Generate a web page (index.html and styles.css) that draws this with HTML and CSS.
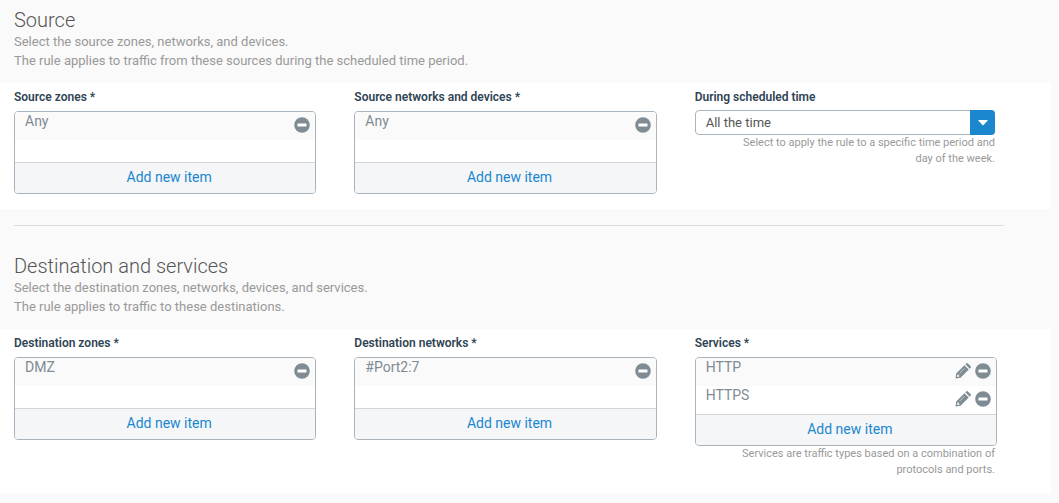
FILE: index.html
```
<!DOCTYPE html>
<html lang="en">

<head>
  <meta charset="UTF-8">
  <meta name="viewport" content="width=device-width, initial-scale=1.0">
  <title>Firewall rule</title>
  <link rel="stylesheet" href="styles.css">
</head>

<body>
  <!-- shared icons -->
  <svg class="icon-defs" aria-hidden="true">
    <symbol id="icon-remove" viewBox="0 0 16 16">
      <circle cx="8" cy="8" r="7.8" fill="currentColor" />
      <rect x="3.5" y="6.5" width="9" height="3" rx="0.5" fill="#fff" />
    </symbol>
    <symbol id="icon-edit" viewBox="0 0 16 16">
      <path fill="currentColor" fill-rule="evenodd" d="M1.2 10.4 9.4 2.2l4.4 4.4-8.2 8.2-5.1.7zM2.4 11.6l-.5 2.5 2.5-.5v-1.2H3.6v-.8zM10.3 1.3l.8-.8a1.3 1.3 0 0 1 1.8 0l2.6 2.6a1.3 1.3 0 0 1 0 1.8l-.8.8z" />
      <path stroke="#fff" stroke-width="0.5" d="M4.6 10.2 9.4 5.4" />
    </symbol>
  </svg>

  <main>
    <section>
      <div class="section-header">
        <h2>Source</h2>
        <p>Select the source zones, networks, and devices.</p>
        <p>The rule applies to traffic from these sources during the scheduled time period.</p>
      </div>
      <div class="panel">
        <div class="field" role="group" aria-labelledby="source-zones">
          <h3 class="label" id="source-zones">Source zones *</h3>
          <div class="list-box">
            <ul>
              <li>
                <span>Any</span>
                <button type="button" class="icon-btn" aria-label="Remove Any"><svg><use href="#icon-remove" /></svg></button>
              </li>
            </ul>
            <button type="button" class="add-btn">Add new item</button>
          </div>
        </div>

        <div class="field" role="group" aria-labelledby="source-networks">
          <h3 class="label" id="source-networks">Source networks and devices *</h3>
          <div class="list-box">
            <ul>
              <li>
                <span>Any</span>
                <button type="button" class="icon-btn" aria-label="Remove Any"><svg><use href="#icon-remove" /></svg></button>
              </li>
            </ul>
            <button type="button" class="add-btn">Add new item</button>
          </div>
        </div>

        <div class="field">
          <label class="label" for="schedule">During scheduled time</label>
          <div class="select-box">
            <select id="schedule">
              <option>All the time</option>
            </select>
            <span class="select-arrow"><svg viewBox="0 0 10 6"><path fill="#fff" d="M.8 0h8.4q1 0 .3.8L5.6 4.9q-.6.6-1.2 0L.5.8Q-.2 0 .8 0z" /></svg></span>
          </div>
          <p class="help">Select to apply the rule to a specific time period and day of the week.</p>
        </div>
      </div>
    </section>

    <hr>

    <section>
      <div class="section-header">
        <h2>Destination and services</h2>
        <p>Select the destination zones, networks, devices, and services.</p>
        <p>The rule applies to traffic to these destinations.</p>
      </div>
      <div class="panel">
        <div class="field" role="group" aria-labelledby="dest-zones">
          <h3 class="label" id="dest-zones">Destination zones *</h3>
          <div class="list-box">
            <ul>
              <li>
                <span>DMZ</span>
                <button type="button" class="icon-btn" aria-label="Remove DMZ"><svg><use href="#icon-remove" /></svg></button>
              </li>
            </ul>
            <button type="button" class="add-btn">Add new item</button>
          </div>
        </div>

        <div class="field" role="group" aria-labelledby="dest-networks">
          <h3 class="label" id="dest-networks">Destination networks *</h3>
          <div class="list-box">
            <ul>
              <li>
                <span>#Port2:7</span>
                <button type="button" class="icon-btn" aria-label="Remove #Port2:7"><svg><use href="#icon-remove" /></svg></button>
              </li>
            </ul>
            <button type="button" class="add-btn">Add new item</button>
          </div>
        </div>

        <div class="field" role="group" aria-labelledby="services">
          <h3 class="label" id="services">Services *</h3>
          <div class="list-box">
            <ul>
              <li>
                <span>HTTP</span>
                <button type="button" class="icon-btn" aria-label="Edit HTTP"><svg><use href="#icon-edit" /></svg></button>
                <button type="button" class="icon-btn" aria-label="Remove HTTP"><svg><use href="#icon-remove" /></svg></button>
              </li>
              <li>
                <span>HTTPS</span>
                <button type="button" class="icon-btn" aria-label="Edit HTTPS"><svg><use href="#icon-edit" /></svg></button>
                <button type="button" class="icon-btn" aria-label="Remove HTTPS"><svg><use href="#icon-remove" /></svg></button>
              </li>
            </ul>
            <button type="button" class="add-btn">Add new item</button>
          </div>
          <p class="help">Services are traffic types based on a combination of protocols and ports.</p>
        </div>
      </div>
    </section>
  </main>
</body>

</html>
```
FILE: styles.css
```
* {
  margin: 0;
  padding: 0;
  box-sizing: border-box;
}

body {
  font-family: Roboto, "Liberation Sans", sans-serif;
  font-size: 13px;
  background: #fafafa;
  color: #999;
}

button,
select {
  font-family: inherit;
}

main {
  padding-right: 8px;
}

.icon-defs {
  display: none;
}

.section-header {
  padding: 8px 14px 13px;
}

.section-header h2 {
  font-size: 20px;
  font-weight: 300;
  line-height: 24px;
  color: #555;
}

.section-header p {
  line-height: 19px;
}

.panel {
  display: grid;
  grid-template-columns: repeat(3, 1fr);
  gap: 38px;
  padding: 6px 54px 15px 14px;
  background: #fff;
}

hr {
  margin: 16px 47px 20px 14px;
  border: none;
  border-top: 1px solid #ddd;
}

.label {
  display: block;
  margin-bottom: 6px;
  font-size: 12px;
  font-weight: 600;
  line-height: 16px;
  color: #2f4454;
}

label.label {
  margin-bottom: 5px;
}

.list-box {
  border: 1px solid #a9b3bb;
  border-radius: 4px;
  overflow: hidden;
}

.list-box ul {
  min-height: 50px;
  list-style: none;
}

.list-box li {
  display: flex;
  align-items: flex-start;
  gap: 4px;
  height: 28px;
  padding: 0 5px 0 10px;
  font-size: 14px;
  line-height: 18px;
  color: #7f8b93;
}

.list-box li:nth-child(odd) {
  background: #fafafa;
}

.list-box li span {
  flex: 1;
}

.icon-btn {
  width: 16px;
  height: 16px;
  margin-top: 5px;
  border: none;
  background: none;
  color: #7f8c94;
  cursor: pointer;
}

.icon-btn svg {
  display: block;
  width: 16px;
  height: 16px;
}

.add-btn {
  display: block;
  width: 100%;
  height: 31px;
  padding: 0 4px 2px 12px;
  border: none;
  border-top: 1px solid #d4d4da;
  background: #f4f6f8;
  color: #1a87cf;
  font-size: 14px;
  cursor: pointer;
}

.select-box {
  display: grid;
  grid-template-columns: 1fr 25px;
  height: 25px;
  margin-right: 2px;
}

.select-box select {
  grid-area: 1 / 1 / 2 / 3;
  width: 100%;
  padding-left: 10px;
  appearance: none;
  border: 1px solid #a9b3bb;
  border-radius: 4px;
  background: #fff;
  color: #555;
  font-size: 13px;
}

.select-arrow {
  grid-area: 1 / 2;
  display: flex;
  align-items: center;
  justify-content: center;
  border-radius: 0 4px 4px 0;
  background: #1a87cf;
  pointer-events: none;
}

.select-arrow svg {
  width: 10px;
  height: 6px;
}

.help {
  padding-left: 32px;
  padding-right: 2px;
  font-size: 11px;
  line-height: 16px;
  text-align: right;
}

@media (max-width: 700px) {
  .panel {
    grid-template-columns: 1fr;
    gap: 20px;
    padding-right: 14px;
  }
}
```
